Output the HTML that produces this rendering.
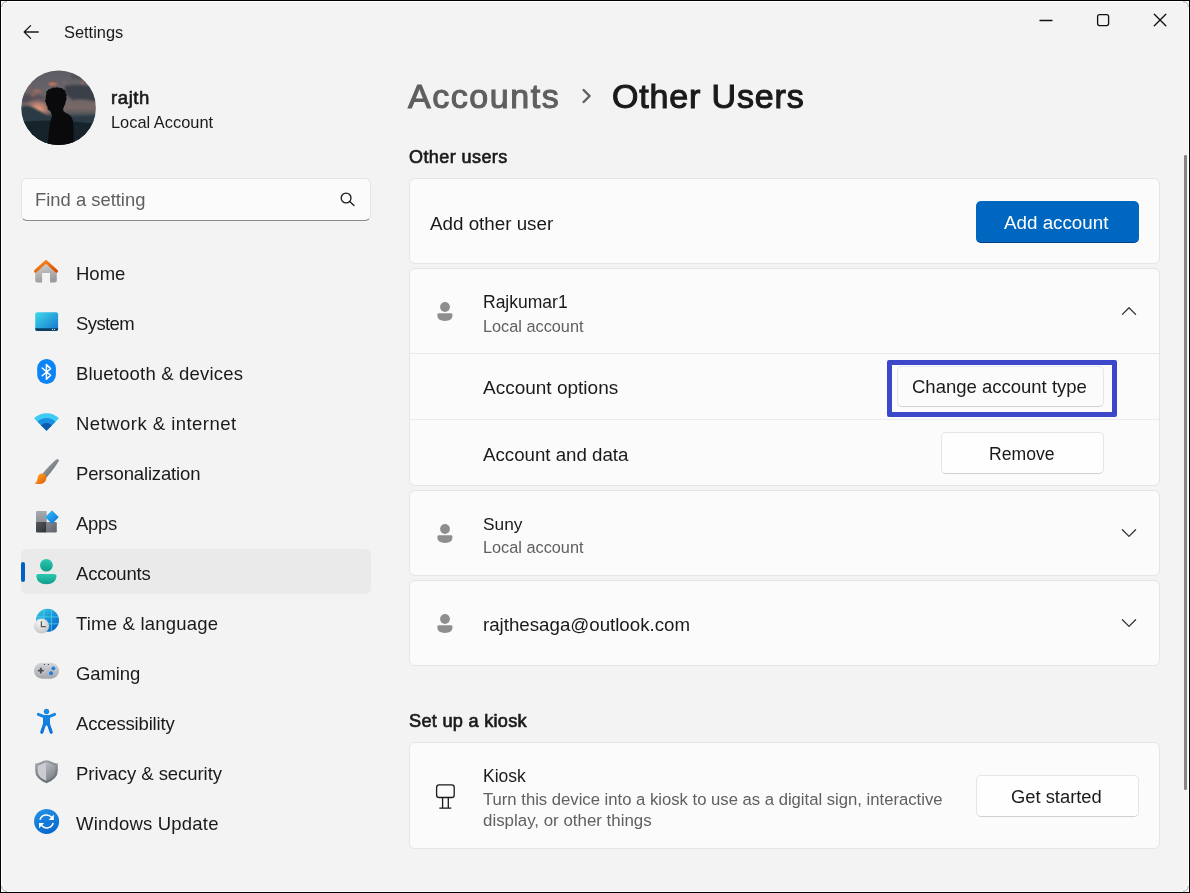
<!DOCTYPE html>
<html><head><meta charset="utf-8"><title>Settings</title>
<style>
html,body{margin:0;padding:0;}
body{width:1190px;height:893px;overflow:hidden;background:#000;position:relative;font-family:"Liberation Sans",sans-serif;}
#win{position:absolute;left:1px;top:1px;width:1188px;height:891px;background:#fff;}
#inner{position:absolute;left:1px;top:1px;width:1186px;height:889px;background:#f3f3f3;border-radius:8px;}
.t{position:absolute;white-space:nowrap;line-height:1;color:#1a1a1a;will-change:transform;}
</style></head><body>
<div id="win"><div id="inner"></div><svg style="position:absolute;left:0;top:0" width="12" height="12" viewBox="0 0 12 12"><path d="M0.7 6 Q0.9 0.9 6 0.7" transform="" fill="none" stroke="#a8a8a8" stroke-width="1"/></svg><svg style="position:absolute;right:0;top:0" width="12" height="12" viewBox="0 0 12 12"><path d="M0.7 6 Q0.9 0.9 6 0.7" transform="translate(12 0) scale(-1 1)" fill="none" stroke="#a8a8a8" stroke-width="1"/></svg><svg style="position:absolute;left:0;bottom:0" width="12" height="12" viewBox="0 0 12 12"><path d="M0.7 6 Q0.9 0.9 6 0.7" transform="translate(0 12) scale(1 -1)" fill="none" stroke="#a8a8a8" stroke-width="1"/></svg><svg style="position:absolute;right:0;bottom:0" width="12" height="12" viewBox="0 0 12 12"><path d="M0.7 6 Q0.9 0.9 6 0.7" transform="translate(12 12) scale(-1 -1)" fill="none" stroke="#a8a8a8" stroke-width="1"/></svg></div>
<svg style="position:absolute;left:20px;top:22px;" width="22" height="20" viewBox="0 0 22 20"><path d="M4.5 10 H18.2 M10.6 3.6 L4.2 10 L10.6 16.4" fill="none" stroke="#1a1a1a" stroke-width="1.3" stroke-linecap="round" stroke-linejoin="round"/></svg>
<div class="t" style="left:63.90px;top:24.32px;font-size:16.4px;">Settings</div>
<svg style="position:absolute;left:1036px;top:16px;" width="20" height="10" viewBox="0 0 20 10"><path d="M4 4.5 H16" stroke="#111" stroke-width="1.3" stroke-linecap="round"/></svg>
<svg style="position:absolute;left:1093px;top:10px;" width="20" height="20" viewBox="0 0 20 20"><rect x="4.6" y="4.6" width="11" height="11" rx="2" fill="none" stroke="#111" stroke-width="1.3"/></svg>
<svg style="position:absolute;left:1150px;top:10px;" width="20" height="20" viewBox="0 0 20 20"><path d="M4.3 4.3 L15.8 15.8 M15.8 4.3 L4.3 15.8" stroke="#111" stroke-width="1.3" stroke-linecap="round"/></svg>
<svg style="position:absolute;left:21px;top:70px" width="76" height="76" viewBox="0 0 76 76">
<defs>
<clipPath id="cc"><circle cx="37.6" cy="37.8" r="37.3"/></clipPath>
<linearGradient id="sky" x1="0" y1="0" x2="0" y2="1">
<stop offset="0" stop-color="#5c5c64"/><stop offset="0.3" stop-color="#6a6468"/><stop offset="0.5" stop-color="#776866"/><stop offset="0.6" stop-color="#4a5058"/><stop offset="0.75" stop-color="#283640"/><stop offset="1" stop-color="#111a22"/></linearGradient>
<radialGradient id="glow" cx="0.22" cy="0.54" r="0.2"><stop offset="0" stop-color="#ffb488"/><stop offset="0.5" stop-color="#c88474" stop-opacity="0.75"/><stop offset="1" stop-color="#806a68" stop-opacity="0"/></radialGradient>
<filter id="bl" x="-20%" y="-20%" width="140%" height="140%"><feGaussianBlur stdDeviation="1.2"/></filter>
</defs>
<g clip-path="url(#cc)">
<rect width="76" height="76" fill="url(#sky)"/>
<g filter="url(#bl)">
<path d="M44 16 Q60 13 76 18 V32 Q64 28 52 30 Q46 26 44 22Z" fill="#343842" opacity="0.85"/>
<path d="M0 25 Q12 23 24 27 L24 33 Q12 31 0 33Z" fill="#44444e" opacity="0.7"/>
<path d="M50 4 Q62 2 72 8 L70 12 Q58 8 50 9Z" fill="#48484f" opacity="0.6"/>
<path d="M28 13 Q33 12 37 14 Q33 16 28 15Z" fill="#e07a58"/>
<path d="M13 20 Q17 19.5 21 21 Q17 23 13 22Z" fill="#d07058" opacity="0.85"/>
<path d="M10 24.5 Q13 24 15 25.4 Q12.5 26.6 10 25.8Z" fill="#c86a58" opacity="0.8"/>
<path d="M6 17 Q8 16.6 9 18 Q7.4 19 6 18.4Z" fill="#c86a58" opacity="0.7"/>
<path d="M60 11.6 Q62.5 11 64 12.6 Q62 13.6 60 13Z" fill="#c87060" opacity="0.7"/>
<path d="M41.6 11.8 Q43.6 11.4 45.4 12.4 Q43.4 13.4 41.6 12.8Z" fill="#c87060" opacity="0.6"/>
</g>
<rect width="76" height="76" fill="url(#glow)"/>
<path d="M0 37 Q5 35 10 36.5 Q18 40 26 45 Q44 47 76 45 V76 H0Z" fill="#2c3b45" filter="url(#bl)"/>
<path d="M0 52 Q30 48 76 54 V76 H0Z" fill="#17232b"/>
<path d="M25.4 24 Q24.6 21 26.8 20.4 Q27.6 18.4 30 18.8 Q31.6 17 34 17.8 Q36.4 16.6 38.4 18 Q41 17.4 42.4 19.6 Q45 20.2 44.6 23 Q46.4 24.6 45.2 27 Q46.2 29.4 44.6 31.4 Q44.6 34.4 43 36.4 Q42 38.6 42.2 40.2 Q42.6 42 44.6 42.8 Q50.8 45.2 52 51 Q53 62 52.4 76 H26.6 Q27.4 64 28.6 56 Q29.6 50 31 46 Q30.4 43.6 29.6 41.6 Q28 40.6 27.4 39.8 L26.4 38.6 Q27 37.2 26 36 Q24.6 35.2 25.6 34 Q24.4 33.2 24.8 32.2 Q23.2 31.4 24.8 29.6 Q24.4 26.4 25.4 24Z" fill="#0a0a0c"/>
</g></svg>
<div class="t" style="left:111.10px;top:89.14px;font-size:18.5px;-webkit-text-stroke:0.65px #1a1a1a;letter-spacing:0.6px;">rajth</div>
<div class="t" style="left:111.10px;top:114.42px;font-size:16.4px;">Local Account</div>
<div style="position:absolute;left:21px;top:178px;width:350px;height:43px;background:#fbfbfb;border:1px solid #e5e5e5;border-bottom:1px solid #8a8a8a;border-radius:6px;box-sizing:border-box;"></div>
<div class="t" style="left:35.30px;top:191.22px;font-size:18.4px;color:#5f5f5f;">Find a setting</div>
<svg style="position:absolute;left:336px;top:188px;" width="24" height="24" viewBox="0 0 24 24"><circle cx="10.1" cy="10" r="4.9" fill="none" stroke="#1a1a1a" stroke-width="1.3"/><path d="M13.7 13.6 L18 17.6" stroke="#1a1a1a" stroke-width="1.3" stroke-linecap="round"/></svg>
<div style="position:absolute;left:21px;top:549px;width:350px;height:45px;background:#eaeaea;border-radius:6px;"></div>
<div style="position:absolute;left:21px;top:561.6px;width:4px;height:20.399999999999977px;background:#0060c4;border-radius:2px;"></div>
<div class="t" style="left:76.30px;top:265.14px;font-size:18.5px;letter-spacing:0px;">Home</div>
<div class="t" style="left:76.30px;top:315.14px;font-size:18.5px;letter-spacing:-0.6px;">System</div>
<div class="t" style="left:76.30px;top:365.14px;font-size:18.5px;letter-spacing:0.19px;">Bluetooth &amp; devices</div>
<div class="t" style="left:76.30px;top:415.14px;font-size:18.5px;letter-spacing:0.47px;">Network &amp; internet</div>
<div class="t" style="left:76.30px;top:465.14px;font-size:18.5px;letter-spacing:-0.14px;">Personalization</div>
<div class="t" style="left:76.30px;top:515.14px;font-size:18.5px;letter-spacing:-0.3px;">Apps</div>
<div class="t" style="left:76.30px;top:565.14px;font-size:18.5px;letter-spacing:-0.2px;">Accounts</div>
<div class="t" style="left:76.30px;top:615.14px;font-size:18.5px;letter-spacing:0.2px;">Time &amp; language</div>
<div class="t" style="left:76.30px;top:665.14px;font-size:18.5px;letter-spacing:-0.1px;">Gaming</div>
<div class="t" style="left:76.30px;top:715.14px;font-size:18.5px;letter-spacing:-0.17px;">Accessibility</div>
<div class="t" style="left:76.30px;top:765.14px;font-size:18.5px;letter-spacing:-0.06px;">Privacy &amp; security</div>
<div class="t" style="left:76.30px;top:815.14px;font-size:18.5px;letter-spacing:0.2px;">Windows Update</div>
<svg style="position:absolute;left:30px;top:255px" width="34" height="34" viewBox="0 0 34 34">
<defs><linearGradient id="hb" x1="0" y1="0" x2="0.3" y2="1"><stop offset="0" stop-color="#d6d6d6"/><stop offset="1" stop-color="#9c9c9c"/></linearGradient>
<linearGradient id="hr" x1="0" y1="0" x2="1" y2="1"><stop offset="0" stop-color="#ff8c1a"/><stop offset="1" stop-color="#d84a00"/></linearGradient></defs>
<path d="M5.2 16 L16 7.4 L26.8 16 V25.8 Q26.8 27.6 25 27.6 H20 V18 H12.1 V27.6 H7 Q5.2 27.6 5.2 25.8Z" fill="url(#hb)"/>
<path d="M5.5 16.2 L16 6.6 L26.5 16.2" fill="none" stroke="url(#hr)" stroke-width="3" stroke-linecap="round" stroke-linejoin="round"/>
</svg>
<svg style="position:absolute;left:30px;top:305px" width="34" height="34" viewBox="0 0 34 34">
<defs><linearGradient id="sy" x1="0" y1="0" x2="1" y2="1"><stop offset="0" stop-color="#3fdbe8"/><stop offset="1" stop-color="#1473cf"/></linearGradient></defs>
<rect x="5.2" y="7.2" width="22.9" height="18.7" rx="2" fill="url(#sy)"/>
<path d="M5.2 23.2 H28.1 V23.9 Q28.1 25.9 26.1 25.9 H7.2 Q5.2 25.9 5.2 23.9Z" fill="#0c3d62"/>
<circle cx="22.5" cy="24.5" r="0.65" fill="#b8d8e8"/><circle cx="24.5" cy="24.5" r="0.65" fill="#b8d8e8"/>
</svg>
<svg style="position:absolute;left:30px;top:355px" width="34" height="34" viewBox="0 0 34 34">
<rect x="7.2" y="4" width="18.7" height="25" rx="9.3" fill="#0a84f6"/>
<path d="M12.2 13 L20.6 20.2 L16.4 24.2 V9.6 L20.6 13.6 L12.2 20.8" fill="none" stroke="#fff" stroke-width="1.5" stroke-linejoin="round" stroke-linecap="round"/>
</svg>
<svg style="position:absolute;left:30px;top:405px" width="34" height="34" viewBox="0 0 34 34">
<path d="M4 13.3 A17.7 17.7 0 0 1 29 13.3 L16.5 25.8Z" fill="#3ccbf4"/>
<path d="M7.5 16.8 A12.7 12.7 0 0 1 25.5 16.8 L16.5 25.8Z" fill="#1a90e0"/>
<path d="M11 20.3 A7.8 7.8 0 0 1 22 20.3 L16.5 25.8Z" fill="#0c5aaa"/>
</svg>
<svg style="position:absolute;left:30px;top:455px" width="34" height="34" viewBox="0 0 34 34">
<defs><linearGradient id="bh" x1="0" y1="0" x2="1" y2="1"><stop offset="0" stop-color="#a8aeb4"/><stop offset="1" stop-color="#5a6066"/></linearGradient>
<linearGradient id="bo" x1="0" y1="0" x2="1" y2="1"><stop offset="0" stop-color="#ffb41c"/><stop offset="1" stop-color="#e4520c"/></linearGradient></defs>
<path d="M26.2 4.6 Q28.4 3.4 29 5.6 Q26.6 10.6 16.6 22.6 L12 19.2 Q20.6 9.4 26.2 4.6Z" fill="url(#bh)"/>
<path d="M11.6 18.6 Q15.8 18.2 16.4 22.2 Q16.6 26.6 12.4 28.4 Q9.4 29.6 4.4 28.6 Q7 27.4 7.4 24.6 Q7.6 19.2 11.6 18.6Z" fill="url(#bo)"/>
</svg>
<svg style="position:absolute;left:30px;top:505px" width="34" height="34" viewBox="0 0 34 34">
<defs><linearGradient id="ab" x1="0" y1="0" x2="1" y2="1"><stop offset="0" stop-color="#32c4f8"/><stop offset="1" stop-color="#0a70d8"/></linearGradient>
<linearGradient id="ag1" x1="0" y1="0" x2="0" y2="1"><stop offset="0" stop-color="#a6aab0"/><stop offset="1" stop-color="#8e9298"/></linearGradient>
<linearGradient id="ag2" x1="0" y1="0" x2="1" y2="1"><stop offset="0" stop-color="#55595e"/><stop offset="1" stop-color="#2c2f33"/></linearGradient>
<linearGradient id="ag3" x1="0" y1="0" x2="1" y2="1"><stop offset="0" stop-color="#868a90"/><stop offset="1" stop-color="#5c6066"/></linearGradient></defs>
<path d="M7.3 6.1 Q6 6.1 6 7.4 V16.9 H16.7 V6.1Z" fill="url(#ag1)"/>
<path d="M6 16.9 V26.3 Q6 27.6 7.3 27.6 H16.7 V16.9Z" fill="url(#ag2)"/>
<path d="M16.7 16.9 V27.6 H25.5 Q26.8 27.6 26.8 26.3 V18.2 Q26.8 16.9 25.5 16.9Z" fill="url(#ag3)"/>
<path d="M21.3 5.9 Q22 5.2 22.7 5.9 L28.2 11.4 Q28.9 12.1 28.2 12.8 L22.7 18.3 Q22 19 21.3 18.3 L15.8 12.8 Q15.1 12.1 15.8 11.4Z" fill="url(#ab)"/>
</svg>
<svg style="position:absolute;left:30px;top:555px" width="34" height="34" viewBox="0 0 34 34">
<defs><linearGradient id="pg" x1="0" y1="0" x2="0" y2="1"><stop offset="0" stop-color="#2cc9b0"/><stop offset="1" stop-color="#0f9c8a"/></linearGradient></defs>
<circle cx="16.4" cy="10.3" r="6.3" fill="url(#pg)"/>
<path d="M8.8 19 H24 Q26.6 19 26.5 21.2 Q25.6 29.2 16.4 29.2 Q7.2 29.2 6.3 21.2 Q6.2 19 8.8 19Z" fill="url(#pg)"/>
</svg>
<svg style="position:absolute;left:30px;top:605px" width="34" height="34" viewBox="0 0 34 34">
<defs><linearGradient id="gl" x1="0.1" y1="0" x2="0.8" y2="1"><stop offset="0" stop-color="#36c9e4"/><stop offset="0.5" stop-color="#1a94d6"/><stop offset="1" stop-color="#0b62c4"/></linearGradient>
<radialGradient id="clk" cx="0.4" cy="0.3" r="0.75"><stop offset="0" stop-color="#f6f6f6"/><stop offset="1" stop-color="#c2c2c4"/></radialGradient>
<clipPath id="gcp"><circle cx="17.5" cy="15.3" r="11.5"/></clipPath></defs>
<circle cx="17.5" cy="15.3" r="11.5" fill="url(#gl)"/>
<g clip-path="url(#gcp)" stroke="#52d4ee" stroke-width="1" opacity="0.75">
<path d="M13.9 3 V28 M21.4 3 V28 M5 11.9 H30 M5 18.8 H30" fill="none"/>
</g>
<circle cx="11.5" cy="21" r="7.6" fill="url(#clk)"/>
<path d="M11.4 16.2 V21.6 H15.8" fill="none" stroke="#5a5a5a" stroke-width="1.3"/>
</svg>
<svg style="position:absolute;left:30px;top:655px" width="34" height="34" viewBox="0 0 34 34">
<defs><linearGradient id="gp" x1="0" y1="0" x2="0" y2="1"><stop offset="0" stop-color="#d4d6da"/><stop offset="1" stop-color="#a3a6ab"/></linearGradient></defs>
<rect x="4" y="7.8" width="25" height="15.9" rx="7.95" fill="url(#gp)"/>
<circle cx="10.7" cy="15.7" r="4.4" fill="#c4c7cb" opacity="0.6"/>
<path d="M7.9 15.7 H13.7 M10.8 12.8 V18.6" stroke="#4a4c50" stroke-width="1.8"/>
<circle cx="23.4" cy="13.3" r="1.9" fill="#1a7ee6"/><circle cx="21" cy="18.2" r="2" fill="#1a7ee6"/>
<circle cx="14.5" cy="9.5" r="0.6" fill="#333"/><circle cx="18.4" cy="9.5" r="0.6" fill="#333"/>
</svg>
<svg style="position:absolute;left:30px;top:705px" width="34" height="34" viewBox="0 0 34 34">
<defs><linearGradient id="acg" gradientUnits="userSpaceOnUse" x1="0" y1="4" x2="0" y2="28"><stop offset="0" stop-color="#1a8ce6"/><stop offset="1" stop-color="#0b74d8"/></linearGradient></defs>
<g fill="url(#acg)" stroke="url(#acg)">
<circle cx="16.5" cy="6.5" r="2.7" stroke="none"/>
<path d="M8.4 9.4 L13.4 11.4 H19.6 L24.6 9.4" fill="none" stroke-width="3" stroke-linecap="round" stroke-linejoin="round"/>
<path d="M13 10.8 H20 V20.6 H13Z" stroke="none"/>
<path d="M14.4 19.6 L11.8 27.3 M18.6 19.6 L21.2 27.3" fill="none" stroke-width="3.2" stroke-linecap="round"/>
</g>
</svg>
<svg style="position:absolute;left:30px;top:755px" width="34" height="34" viewBox="0 0 34 34">
<defs><linearGradient id="sh" x1="0" y1="0" x2="0.3" y2="1"><stop offset="0" stop-color="#a4a8ae"/><stop offset="1" stop-color="#6c7076"/></linearGradient>
<linearGradient id="shr" x1="0" y1="0" x2="0.4" y2="1"><stop offset="0" stop-color="#b8bcc2"/><stop offset="1" stop-color="#7e838a"/></linearGradient></defs>
<path d="M5.2 8.6 C9.6 8.6 12.6 5.2 16.5 5.2 C20.4 5.2 23.4 8.6 27.8 8.6 V16 Q27.8 23.6 16.5 28.2 Q5.2 23.6 5.2 16 Z" fill="url(#sh)"/>
<path d="M16.5 7.6 C13.2 7.6 11 10.4 7.6 10.6 V16.2 Q7.6 22 16.5 25.8Z" fill="#c9ccd1"/>
<path d="M16.5 7.6 C19.8 7.6 22 10.4 25.4 10.6 V16.2 Q25.4 22 16.5 25.8Z" fill="url(#shr)"/>
</svg>
<svg style="position:absolute;left:30px;top:805px" width="34" height="34" viewBox="0 0 34 34">
<defs><linearGradient id="wu" x1="0" y1="0" x2="0.3" y2="1"><stop offset="0" stop-color="#2394e6"/><stop offset="1" stop-color="#0a6ad0"/></linearGradient></defs>
<circle cx="16.6" cy="16.4" r="12.5" fill="url(#wu)"/>
<path d="M10 14.8 A6.8 6.8 0 0 1 21.6 12.2" fill="none" stroke="#fff" stroke-width="1.5"/>
<path d="M23.8 9.6 V14.9 H18.6Z" fill="#fff"/>
<path d="M23.2 18 A6.8 6.8 0 0 1 11.6 20.6" fill="none" stroke="#fff" stroke-width="1.5"/>
<path d="M9 23.2 V17.9 H14.2Z" fill="#fff"/>
</svg>
<div class="t" style="left:407.50px;top:79.22px;font-size:34px;color:#5f5f5f;-webkit-text-stroke:1.1px #5f5f5f;letter-spacing:1.55px;">Accounts</div>
<svg style="position:absolute;left:578px;top:86px;" width="16" height="20" viewBox="0 0 16 20"><path d="M5.6 4 L11.6 10 L5.6 16" fill="none" stroke="#5f5f5f" stroke-width="2.4" stroke-linecap="round" stroke-linejoin="round"/></svg>
<div class="t" style="left:611.90px;top:79.22px;font-size:34px;-webkit-text-stroke:1.1px #1a1a1a;letter-spacing:0.85px;">Other Users</div>
<div class="t" style="left:409.10px;top:147.86px;font-size:18px;-webkit-text-stroke:0.65px #1a1a1a;letter-spacing:0.42px;">Other users</div>
<div style="position:absolute;left:409px;top:178px;width:751px;height:86px;background:#fbfbfb;border:1px solid #e5e5e5;border-radius:6px;box-sizing:border-box;"></div>
<div class="t" style="left:430.10px;top:214.89px;font-size:18.8px;">Add other user</div>
<div style="position:absolute;left:976px;top:201px;width:163px;height:42px;background:#0067c0;border-radius:5px;border-bottom:1px solid #003f88;box-sizing:border-box;"></div>
<div class="t" style="left:1004.00px;top:213.89px;font-size:18.8px;color:#ffffff;">Add account</div>
<div style="position:absolute;left:409px;top:268px;width:751px;height:218px;background:#fbfbfb;border:1px solid #e5e5e5;border-radius:6px;box-sizing:border-box;"></div>
<svg style="position:absolute;left:434.7px;top:300px;" width="20" height="24" viewBox="0 0 20 24"><circle cx="10" cy="7" r="4.9" fill="#8e8e8e"/><path d="M3.8 13.2 H16 Q17.4 13.2 17.4 14.6 V15.6 Q17.4 21 10 21 Q2.4 21 2.4 15.6 V14.6 Q2.4 13.2 3.8 13.2Z" fill="#8e8e8e"/></svg>
<div class="t" style="left:483.10px;top:293.99px;font-size:17.5px;">Rajkumar1</div>
<div class="t" style="left:483.10px;top:317.50px;font-size:16.3px;color:#606060;">Local account</div>
<svg style="position:absolute;left:1119px;top:303.6px;" width="20" height="14" viewBox="0 0 20 14"><path d="M3.4 10.4 L10 3.8 L16.6 10.4" fill="none" stroke="#333" stroke-width="1.3" stroke-linecap="round" stroke-linejoin="round"/></svg>
<div style="position:absolute;left:410px;top:353px;width:749px;height:1px;background:#e8e8e8;"></div>
<div class="t" style="left:483.10px;top:377.72px;font-size:19px;">Account options</div>
<div style="position:absolute;left:897px;top:366px;width:207px;height:41px;background:#fbfbfb;border:1px solid #e5e5e5;border-bottom-color:#d0d0d0;border-radius:5px;box-sizing:border-box;"></div>
<div class="t" style="left:912.10px;top:378.14px;font-size:18.5px;">Change account type</div>
<div style="position:absolute;left:886.5px;top:359.5px;width:230.0999999999999px;height:57.89999999999998px;border:5px solid #3d47c9;border-radius:2px;box-sizing:border-box;"></div>
<div style="position:absolute;left:410px;top:419px;width:749px;height:1px;background:#ebebeb;"></div>
<div class="t" style="left:483.10px;top:445.97px;font-size:18.7px;">Account and data</div>
<div style="position:absolute;left:941px;top:432px;width:163px;height:42px;background:#fefefe;border:1px solid #e5e5e5;border-bottom-color:#d0d0d0;border-radius:5px;box-sizing:border-box;"></div>
<div class="t" style="left:989.40px;top:445.80px;font-size:17.6px;">Remove</div>
<div style="position:absolute;left:409px;top:490px;width:751px;height:86px;background:#fbfbfb;border:1px solid #e5e5e5;border-radius:6px;box-sizing:border-box;"></div>
<svg style="position:absolute;left:434.7px;top:522px;" width="20" height="24" viewBox="0 0 20 24"><circle cx="10" cy="7" r="4.9" fill="#8e8e8e"/><path d="M3.8 13.2 H16 Q17.4 13.2 17.4 14.6 V15.6 Q17.4 21 10 21 Q2.4 21 2.4 15.6 V14.6 Q2.4 13.2 3.8 13.2Z" fill="#8e8e8e"/></svg>
<div class="t" style="left:483.10px;top:516.16px;font-size:17.3px;">Suny</div>
<div class="t" style="left:483.10px;top:539.00px;font-size:16.3px;color:#606060;">Local account</div>
<svg style="position:absolute;left:1119px;top:526px;" width="20" height="14" viewBox="0 0 20 14"><path d="M3.4 3.8 L10 10.4 L16.6 3.8" fill="none" stroke="#333" stroke-width="1.3" stroke-linecap="round" stroke-linejoin="round"/></svg>
<div style="position:absolute;left:409px;top:580px;width:751px;height:86px;background:#fbfbfb;border:1px solid #e5e5e5;border-radius:6px;box-sizing:border-box;"></div>
<svg style="position:absolute;left:434.7px;top:611.5px;" width="20" height="24" viewBox="0 0 20 24"><circle cx="10" cy="7" r="4.9" fill="#8e8e8e"/><path d="M3.8 13.2 H16 Q17.4 13.2 17.4 14.6 V15.6 Q17.4 21 10 21 Q2.4 21 2.4 15.6 V14.6 Q2.4 13.2 3.8 13.2Z" fill="#8e8e8e"/></svg>
<div class="t" style="left:483.10px;top:616.37px;font-size:18.7px;">rajthesaga@outlook.com</div>
<svg style="position:absolute;left:1119px;top:616px;" width="20" height="14" viewBox="0 0 20 14"><path d="M3.4 3.8 L10 10.4 L16.6 3.8" fill="none" stroke="#333" stroke-width="1.3" stroke-linecap="round" stroke-linejoin="round"/></svg>
<div class="t" style="left:409.10px;top:711.89px;font-size:18.2px;-webkit-text-stroke:0.65px #1a1a1a;letter-spacing:0.26px;">Set up a kiosk</div>
<div style="position:absolute;left:409px;top:742px;width:751px;height:107px;background:#fbfbfb;border:1px solid #e5e5e5;border-radius:6px;box-sizing:border-box;"></div>
<svg style="position:absolute;left:430px;top:778px;" width="26" height="34" viewBox="0 0 26 34"><rect x="6.6" y="6.9" width="17.6" height="12.6" rx="2.6" fill="none" stroke="#1a1a1a" stroke-width="1.3"/><path d="M12.6 19.5 V30 M18.3 19.5 V30 M9.3 30.2 H21.3" stroke="#1a1a1a" stroke-width="1.3" fill="none"/></svg>
<div class="t" style="left:483.10px;top:767.59px;font-size:17.5px;">Kiosk</div>
<div class="t" style="left:483.10px;top:791.69px;font-size:16.67px;color:#606060;">Turn this device into a kiosk to use as a digital sign, interactive</div>
<div class="t" style="left:483.10px;top:813.49px;font-size:16.9px;color:#606060;">display, or other things</div>
<div style="position:absolute;left:976px;top:775px;width:163px;height:42px;background:#fefefe;border:1px solid #e5e5e5;border-bottom-color:#d0d0d0;border-radius:5px;box-sizing:border-box;"></div>
<div class="t" style="left:1011.20px;top:787.77px;font-size:18.35px;">Get started</div>
<div style="position:absolute;left:1184.2px;top:155px;width:2.3999999999998636px;height:634.6px;background:#868686;border-radius:1.2px;"></div>
</body></html>
